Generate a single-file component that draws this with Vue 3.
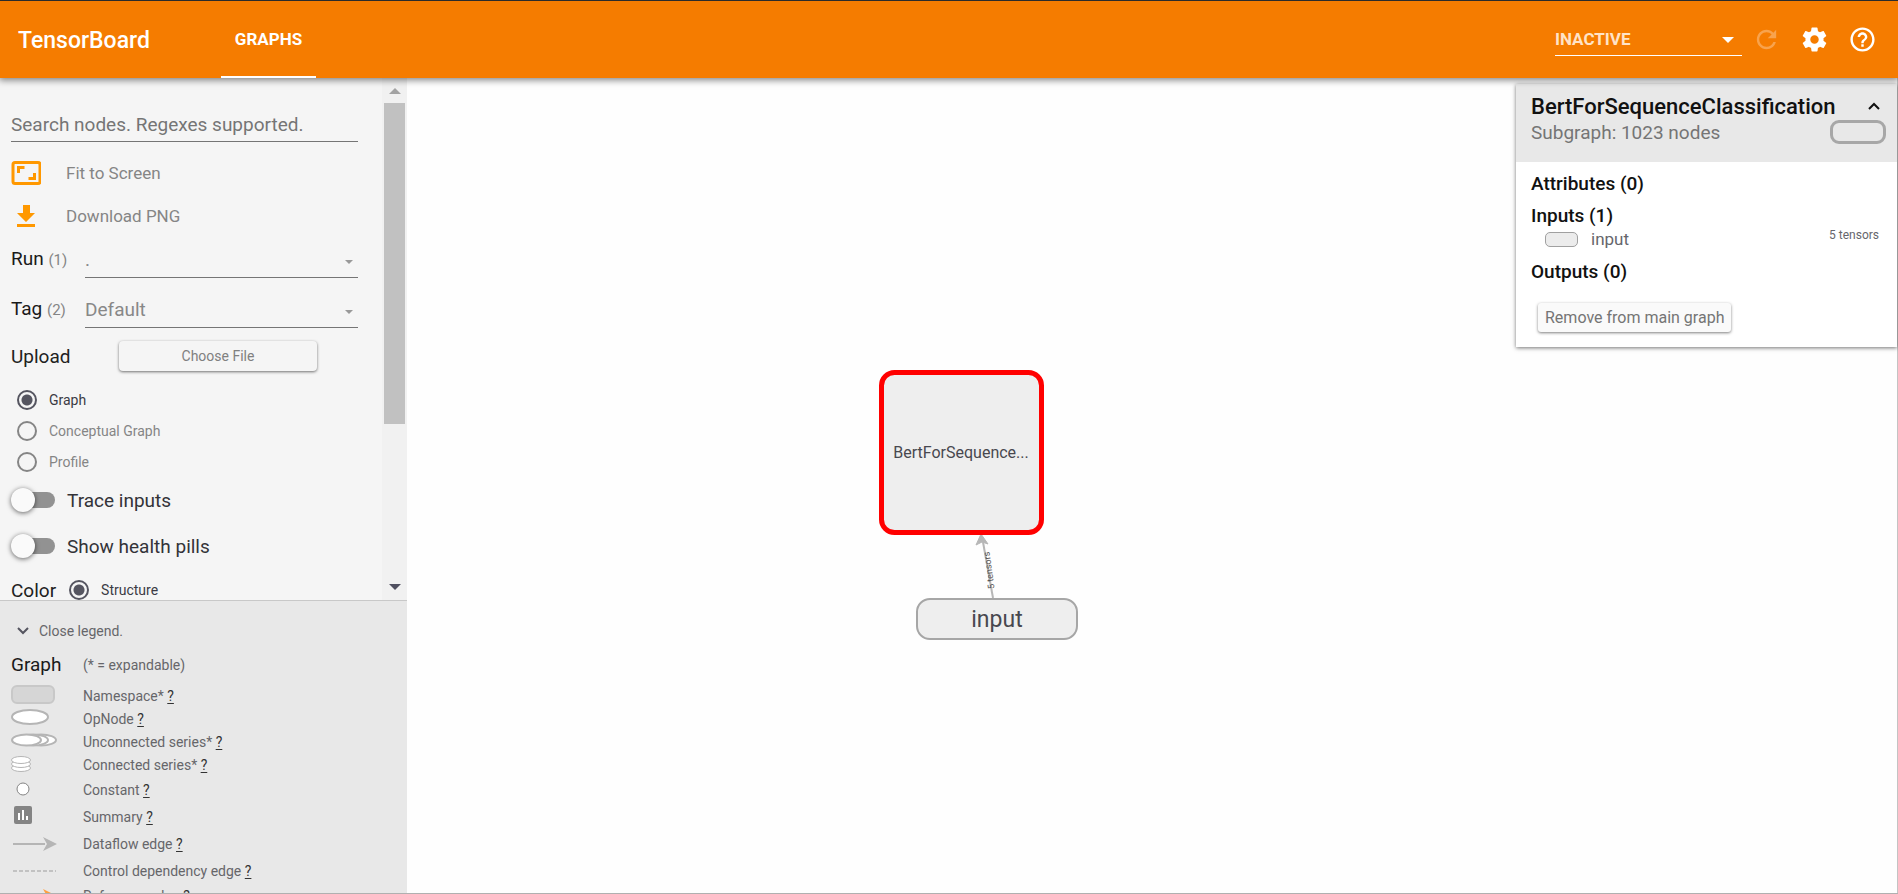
<script setup>
import { ref } from 'vue'

const search = ref('')
const run = ref('.')
const tag = ref('Default')
const graphType = ref('graph')
const colorBy = ref('structure')
const traceInputs = ref(false)
const healthPills = ref(false)

const graphTypes = [
  { id: 'graph', label: 'Graph' },
  { id: 'conceptual', label: 'Conceptual Graph' },
  { id: 'profile', label: 'Profile' },
]

const legend = [
  { id: 'namespace', label: 'Namespace*' },
  { id: 'op', label: 'OpNode' },
  { id: 'unconnected', label: 'Unconnected series*' },
  { id: 'connected', label: 'Connected series*' },
  { id: 'constant', label: 'Constant', tall: true },
  { id: 'summary', label: 'Summary', tall: true },
  { id: 'dataflow', label: 'Dataflow edge', tall: true },
  { id: 'control', label: 'Control dependency edge', tall: true },
  { id: 'reference', label: 'Reference edge' },
]
</script>

<template>
  <div class="app">
    <header class="toolbar">
      <h1 class="brand">TensorBoard</h1>
      <nav class="tabs">
        <a href="#graphs" class="tab">GRAPHS</a>
      </nav>
      <div class="actions">
        <div class="plugin-wrap">
          <select class="plugin" aria-label="Inactive plugins">
            <option>INACTIVE</option>
          </select>
          <svg class="plugin-arrow" width="12" height="6" viewBox="0 0 12 6"><path d="M0 0h12L6 6z" fill="#fff" /></svg>
        </div>
        <button class="icon-btn" type="button" disabled aria-label="Reload">
          <svg width="29" height="29" viewBox="0 0 24 24"><path fill="#fff" fill-opacity=".3" d="M17.65 6.35C16.2 4.9 14.21 4 12 4c-4.42 0-7.99 3.58-7.99 8s3.57 8 7.99 8c3.73 0 6.84-2.55 7.73-6h-2.08c-.82 2.33-3.04 4-5.65 4-3.31 0-6-2.69-6-6s2.69-6 6-6c1.66 0 3.14.69 4.22 1.78L13 11h7V4l-2.35 2.35z" /></svg>
        </button>
        <button class="icon-btn" type="button" aria-label="Settings">
          <svg width="29" height="29" viewBox="0 0 24 24"><path fill="#fff" d="M19.43 12.98c.04-.32.07-.64.07-.98s-.03-.66-.07-.98l2.11-1.65c.19-.15.24-.42.12-.64l-2-3.46c-.12-.22-.39-.3-.61-.22l-2.49 1c-.52-.4-1.08-.73-1.69-.98l-.38-2.65C14.46 2.18 14.25 2 14 2h-4c-.25 0-.46.18-.49.42l-.38 2.65c-.61.25-1.17.59-1.69.98l-2.49-1c-.23-.09-.49 0-.61.22l-2 3.46c-.13.22-.07.49.12.64l2.11 1.65c-.04.32-.07.65-.07.98s.03.66.07.98l-2.11 1.65c-.19.15-.24.42-.12.64l2 3.46c.12.22.39.3.61.22l2.49-1c.52.4 1.08.73 1.69.98l.38 2.65c.03.24.24.42.49.42h4c.25 0 .46-.18.49-.42l.38-2.65c.61-.25 1.17-.59 1.69-.98l2.49 1c.23.09.49 0 .61-.22l2-3.46c.12-.22.07-.49-.12-.64l-2.11-1.65zM12 15.5c-1.93 0-3.5-1.57-3.5-3.5s1.57-3.5 3.5-3.5 3.5 1.57 3.5 3.5-1.57 3.5-3.5 3.5z" /></svg>
        </button>
        <button class="icon-btn" type="button" aria-label="Help">
          <svg width="29" height="29" viewBox="0 0 24 24"><path fill="#fff" d="M11 18h2v-2h-2v2zm1-16C6.48 2 2 6.48 2 12s4.48 10 10 10 10-4.48 10-10S17.52 2 12 2zm0 18c-4.41 0-8-3.59-8-8s3.59-8 8-8 8 3.59 8 8-3.59 8-8 8zm0-14c-2.21 0-4 1.79-4 4h2c0-1.1.9-2 2-2s2 .9 2 2c0 2-3 1.75-3 5h2c0-2.25 3-2.5 3-5 0-2.21-1.79-4-4-4z" /></svg>
        </button>
      </div>
    </header>

    <div class="body">
      <aside class="sidebar">
        <div class="controls">
          <div class="controls-content">
            <input v-model="search" class="search" type="text" placeholder="Search nodes. Regexes supported." aria-label="Search nodes" />

            <button class="action" type="button">
              <svg width="30" height="24" viewBox="0 0 30 24" fill="none" stroke="#ff9800">
                <rect x="2" y="1.5" width="27" height="21" rx="2" stroke-width="3" />
                <path d="M7.500 12V6.500h6M17.500 17.500h6V12" stroke-width="3" />
              </svg>
              <span>Fit to Screen</span>
            </button>
            <button class="action" type="button">
              <svg width="30" height="24" viewBox="0 0 30 24" fill="#ff9800">
                <path d="M12 1h7v8h5l-9 9-9-9h6zM6 20h18v3H6z" />
              </svg>
              <span>Download PNG</span>
            </button>

            <div class="field first">
              <label class="field-label" for="run">Run <span class="count">(1)</span></label>
              <div class="select-wrap">
                <select id="run" v-model="run" class="select"><option>.</option></select>
                <svg class="select-arrow" width="8" height="4" viewBox="0 0 8 4"><path d="M0 0h8L4 4z" fill="#999" /></svg>
              </div>
            </div>
            <div class="field">
              <label class="field-label" for="tag">Tag <span class="count">(2)</span></label>
              <div class="select-wrap">
                <select id="tag" v-model="tag" class="select"><option>Default</option></select>
                <svg class="select-arrow" width="8" height="4" viewBox="0 0 8 4"><path d="M0 0h8L4 4z" fill="#999" /></svg>
              </div>
            </div>
            <div class="upload">
              <span class="upload-label">Upload</span>
              <button class="choose" type="button">Choose File</button>
            </div>

            <div class="radios">
              <label v-for="t in graphTypes" :key="t.id" class="radio-row" :class="{ chosen: graphType === t.id }">
                <input v-model="graphType" class="radio" type="radio" name="graph-type" :value="t.id" />
                <span>{{ t.label }}</span>
              </label>
            </div>

            <label class="toggle-row">
              <input v-model="traceInputs" class="toggle" type="checkbox" />
              <span>Trace inputs</span>
            </label>
            <label class="toggle-row">
              <input v-model="healthPills" class="toggle" type="checkbox" />
              <span>Show health pills</span>
            </label>

            <div class="color-row">
              <span>Color</span>
              <label class="radio-row chosen">
                <input v-model="colorBy" class="radio" type="radio" name="color-by" value="structure" />
                <span>Structure</span>
              </label>
            </div>
          </div>
          <div class="scrollbar">
            <svg width="12" height="6" viewBox="0 0 12 6"><path d="M0 6h12L6 0z" fill="#a3a3a3" /></svg>
            <div class="track"><div class="thumb"></div></div>
            <svg width="12" height="6" viewBox="0 0 12 6"><path d="M0 0h12L6 6z" fill="#505060" /></svg>
          </div>
        </div>

        <section class="legend">
          <button class="legend-toggle" type="button">
            <svg width="12" height="8" viewBox="0 0 12 8" fill="none" stroke="#555560" stroke-width="2"><path d="M1 1l5 5 5-5" /></svg>
            <span>Close legend.</span>
          </button>
          <div class="legend-head">
            <h2>Graph</h2>
            <span>(* = expandable)</span>
          </div>
          <div v-for="item in legend" :key="item.id" class="legend-row" :class="{ tall: item.tall }">
            <svg class="legend-icon" width="48" height="22" viewBox="0 0 48 22">
              <rect v-if="item.id === 'namespace'" x="1" y="1" width="42" height="17" rx="5" fill="#d6d6d6" stroke="#c8c8c8" stroke-width="2" />
              <ellipse v-else-if="item.id === 'op'" cx="19" cy="9" rx="18" ry="7" fill="#fff" stroke="#b5b5b5" stroke-width="2" />
              <g v-else-if="item.id === 'unconnected'" fill="#fff" stroke="#b5b5b5" stroke-width="2">
                <ellipse cx="30" cy="9" rx="15" ry="5.500" />
                <ellipse cx="22" cy="9" rx="15" ry="5.500" />
                <ellipse cx="15.500" cy="9" rx="14.500" ry="5.500" />
              </g>
              <g v-else-if="item.id === 'connected'" fill="#fff" stroke="#b5b5b5">
                <ellipse cx="10" cy="14" rx="9.500" ry="3.500" />
                <ellipse cx="10" cy="10" rx="9.500" ry="3.500" />
                <ellipse cx="10" cy="6" rx="9.500" ry="3.500" />
              </g>
              <circle v-else-if="item.id === 'constant'" cx="12" cy="10" r="6" fill="#fff" stroke="#848484" stroke-width="1" />
              <g v-else-if="item.id === 'summary'">
                <rect x="3" y="0" width="18" height="18" rx="2" fill="#848484" />
                <path d="M7 7h2v7H7zM11 4h2v10h-2zM15 10h2v4h-2z" fill="#fff" />
              </g>
              <g v-else-if="item.id === 'dataflow'" fill="#b5b5b5">
                <path d="M2 10h32v2H2z" />
                <path d="M32 4l14 7-14 7 4-7z" />
              </g>
              <path v-else-if="item.id === 'control'" d="M2 11h43" stroke="#b5b5b5" stroke-width="1.500" stroke-dasharray="4 2" />
              <g v-else fill="#ff9f40">
                <path d="M2 10h32v2H2z" />
                <path d="M32 4l14 7-14 7 4-7z" />
              </g>
            </svg>
            <span>{{ item.label }} <a class="help" href="#help">?</a></span>
          </div>
        </section>
      </aside>

      <main class="canvas">
        <svg class="graph" width="100%" height="100%" role="img" aria-label="Model graph">
          <path d="M586 520l-10-56" stroke="#b7b7b7" stroke-width="2" />
          <path d="M574 456l7 10-6-2-6 3z" fill="#b7b7b7" stroke="#b7b7b7" />
          <rect x="474.500" y="294.500" width="160" height="160" rx="13" fill="#eee" stroke="#f00" stroke-width="5" />
          <text x="554" y="380" text-anchor="middle" class="node-text">BertForSequence...</text>
          <rect x="510" y="521" width="160" height="40" rx="13" fill="#eee" stroke="#a6a6a6" stroke-width="2" />
          <text x="590" y="549" text-anchor="middle" class="node-text large">input</text>
          <text class="edge-text" text-anchor="middle" transform="translate(585 492) rotate(-98)">5 tensors</text>
        </svg>

        <section class="info">
          <header class="info-head">
            <div class="info-line">
              <h2>BertForSequenceClassification</h2>
              <button class="collapse" type="button" aria-label="Collapse">
                <svg width="12" height="8" viewBox="0 0 12 8" fill="none" stroke="#111" stroke-width="2"><path d="M1 7l5-5 5 5" /></svg>
              </button>
            </div>
            <div class="info-line">
              <span class="subtitle">Subgraph: 1023 nodes</span>
              <span class="pill"></span>
            </div>
          </header>
          <div class="info-body">
            <h3>Attributes (0)</h3>
            <h3 class="inputs">Inputs (1)</h3>
            <div class="input-row">
              <span class="mini-pill"></span>
              <span class="input-name">input</span>
              <span class="tensors">5 tensors</span>
            </div>
            <h3 class="outputs">Outputs (0)</h3>
            <button class="remove" type="button">Remove from main graph</button>
          </div>
        </section>
      </main>
    </div>
  </div>
</template>

<style>
body { margin: 0; }
</style>

<style scoped>
.app {
  box-sizing: border-box;
  height: 100vh;
  display: flex;
  flex-direction: column;
  overflow: hidden;
  border-top: 1px solid #2b2b2b;
  border-bottom: 1px solid #b0b0b0;
  background: #fefefe;
  font-family: Roboto, "Liberation Sans", sans-serif;
  font-size: 19px;
  color: #212121;
}
h1, h2, h3 { margin: 0; font-weight: 400; }
button, input, select { font-family: inherit; margin: 0; }
button { border: 0; background: none; padding: 0; cursor: pointer; }
svg { display: block; flex: none; }

.toolbar {
  position: relative;
  z-index: 2;
  flex: none;
  height: 77px;
  display: flex;
  align-items: stretch;
  background: #f57c00;
  color: #fff;
  box-shadow: 0 1px 7px 1px rgba(0, 0, 0, 0.5);
}
.brand {
  width: 203px;
  padding-left: 18px;
  line-height: 79px;
  font-size: 23px;
  font-weight: 500;
}
.tabs { display: flex; }
.tab {
  box-sizing: border-box;
  width: 95px;
  border-bottom: 2px solid #fff;
  color: #fff;
  font-size: 17px;
  font-weight: 700;
  line-height: 77px;
  text-align: center;
  text-decoration: none;
}
.actions {
  margin-left: auto;
  padding-right: 12px;
  display: flex;
  align-items: center;
}
.plugin-wrap { position: relative; width: 187px; }
.plugin {
  display: block;
  box-sizing: border-box;
  width: 100%;
  height: 32px;
  padding: 0;
  border: 0;
  border-bottom: 1px solid #fff;
  border-radius: 0;
  appearance: none;
  background: none;
  color: #ffe3c7;
  font-size: 17px;
  font-weight: 700;
}
.plugin-arrow { position: absolute; right: 8px; top: 13px; }
.icon-btn { width: 48px; height: 48px; display: grid; place-items: center; }

.body { flex: 1; min-height: 0; display: flex; }
.sidebar { flex: none; width: 407px; display: flex; flex-direction: column; background: #f5f5f5; }
.controls { flex: 1; min-height: 0; display: flex; overflow: hidden; }
.controls-content { flex: 1; padding: 29px 24px 0 11px; }
.search {
  box-sizing: border-box;
  display: block;
  width: 100%;
  height: 35px;
  margin-bottom: 9px;
  padding: 0;
  border: 0;
  border-bottom: 1px solid #757575;
  outline: 0;
  background: none;
  font-size: 19px;
}
.search::placeholder { color: #757575; opacity: 1; }
.action {
  width: 100%;
  height: 43px;
  display: flex;
  align-items: center;
  gap: 25px;
  color: #858585;
  font-size: 17px;
}
.field { height: 40px; display: flex; align-items: center; margin-bottom: 10px; }
.field.first { margin-top: 1px; }
.field-label { width: 74px; color: #1a1a1a; }
.count { color: #858585; font-size: 15px; }
.select-wrap { position: relative; flex: 1; }
.select {
  box-sizing: border-box;
  display: block;
  width: 100%;
  height: 40px;
  padding: 4px 0 0;
  border: 0;
  border-bottom: 1px solid #757575;
  border-radius: 0;
  appearance: none;
  background: none;
  color: #888;
  font-size: 19px;
}
.select-arrow { position: absolute; right: 5px; top: 22px; }
.upload { display: flex; align-items: center; margin-top: 13px; }
.upload-label { width: 108px; }
.choose {
  width: 198px;
  height: 30px;
  border-radius: 4px;
  background: #f5f5f5;
  box-shadow: 0 1px 3px rgba(0, 0, 0, 0.55);
  color: #808080;
  font-size: 14px;
}
.radios { margin: 13px 0 0 6px; }
.radio-row { height: 31px; display: flex; align-items: center; gap: 12px; color: #858585; font-size: 14px; }
.radio-row.chosen { color: #3b3b44; }
.radio {
  box-sizing: border-box;
  width: 20px;
  height: 20px;
  border: 2px solid #858585;
  border-radius: 50%;
  appearance: none;
}
.radio:checked {
  border-color: #555560;
  background: radial-gradient(circle, #555560 0 5px, transparent 6px);
}
.toggle-row { height: 46px; display: flex; align-items: center; gap: 12px; color: #333338; }
.toggle {
  width: 44px;
  height: 24px;
  appearance: none;
  display: flex;
  align-items: center;
}
.toggle::before {
  content: "";
  width: 24px;
  height: 24px;
  border-radius: 50%;
  background: #fafafa;
  box-shadow: 0 1px 5px rgba(0, 0, 0, 0.6);
  z-index: 1;
}
.toggle::after {
  content: "";
  width: 32px;
  height: 16px;
  margin-left: -12px;
  border-radius: 8px;
  background: #929292;
}
.color-row { height: 42px; display: flex; align-items: center; gap: 13px; }

.scrollbar {
  flex: none;
  width: 25px;
  box-sizing: border-box;
  padding: 10px 0;
  display: flex;
  flex-direction: column;
  align-items: center;
  background: #f1f1f1;
}
.track { flex: 1; align-self: stretch; padding: 9px 2px; }
.thumb { height: 68%; background: #c1c1c1; }

.legend {
  flex: 0 0 36%;
  box-sizing: border-box;
  overflow: hidden;
  padding: 13px 11px 0;
  border-top: 1px solid #c8c8c8;
  background: #e8e8e8;
  color: #66666a;
  font-size: 14px;
}
.legend-toggle { height: 34px; display: flex; align-items: center; gap: 10px; padding-left: 6px; color: #66666a; font-size: 14px; }
.legend-head { height: 34px; display: flex; align-items: center; margin-bottom: 3px; }
.legend-head h2 { width: 72px; color: #1a1a1a; font-size: 19px; }
.legend-row { height: 23px; display: flex; align-items: center; gap: 24px; }
.legend-row.tall { height: 27px; }
.help { color: #333; text-decoration: underline; text-underline-offset: 2px; }

.canvas { position: relative; flex: 1; min-width: 0; border-right: 1px solid #c4c4c4; }
.node-text { fill: #48484f; font-size: 16px; }
.node-text.large { font-size: 23px; }
.edge-text { fill: #555; font-size: 9px; }

.info {
  position: absolute;
  top: 6px;
  right: 0;
  width: 381px;
  background: #fff;
  box-shadow: 0 1px 4px rgba(0, 0, 0, 0.55);
}
.info-head { box-sizing: border-box; height: 78px; padding: 9px 11px 0 15px; background: #e8e8e8; }
.info-line { display: flex; align-items: center; justify-content: space-between; height: 26px; }
.info-head h2 { color: #111; font-size: 22px; font-weight: 500; }
.collapse { width: 24px; height: 24px; display: grid; place-items: center; }
.subtitle { color: #757575; }
.pill { box-sizing: border-box; width: 56px; height: 24px; border: 3px solid #a7a7a7; border-radius: 9px; }
.info-body { padding: 10px 18px 15px 15px; }
.info-body h3 { color: #111; font-size: 19px; font-weight: 500; line-height: 24px; }
.info-body .inputs { margin-top: 8px; }
.input-row { height: 22px; display: flex; align-items: center; padding-left: 14px; color: #66666c; }
.mini-pill { box-sizing: border-box; width: 33px; height: 15px; margin-right: 13px; border: 1px solid #a0a0a0; border-radius: 5px; background: #ececec; }
.input-name { font-size: 17px; }
.tensors { margin-left: auto; font-size: 12px; line-height: 14px; padding-bottom: 8px; }
.info-body .outputs { margin-top: 10px; }
.remove {
  height: 29px;
  margin: 19px 0 0 7px;
  padding: 0 7px;
  border-radius: 3px;
  background: #fafafa;
  box-shadow: 0 1px 3px rgba(0, 0, 0, 0.5);
  color: #757575;
  font-size: 16px;
}
</style>
